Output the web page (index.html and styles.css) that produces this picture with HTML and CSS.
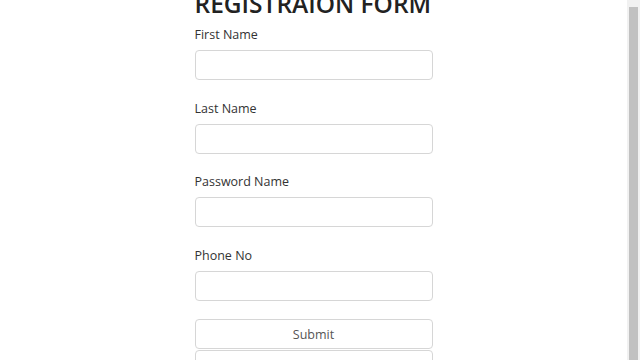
FILE: index.html
```html
<!DOCTYPE html>
<html lang="en">
<head>
    <meta charset="UTF-8">
    <meta name="viewport" content="width=device-width, initial-scale=1.0">
    <title>Registration Form</title>
    <link rel="stylesheet" href="styles.css">
</head>
<body>
    <div class="page">
        <div class="content">
            <form class="form">
                <h1>REGISTRAION FORM</h1>
                <div class="field">
                    <label for="first-name">First Name</label>
                    <input type="text" id="first-name">
                </div>
                <div class="field">
                    <label for="last-name">Last Name</label>
                    <input type="text" id="last-name">
                </div>
                <div class="field">
                    <label for="password">Password Name</label>
                    <input type="password" id="password">
                </div>
                <div class="field">
                    <label for="phone">Phone No</label>
                    <input type="text" id="phone">
                </div>
                <div class="buttons">
                    <button type="submit">Submit</button>
                    <button type="reset">Reset</button>
                </div>
            </form>
        </div>
        <div class="scrollbar">
            <div class="thumb"></div>
        </div>
    </div>
</body>
</html>
```

FILE: styles.css
```css
body {
    margin: 0;
    font-family: "Open Sans", "Noto Sans", sans-serif;
    color: #333;
    background-color: #fff;
}
.page {
    display: flex;
    height: 360px;
    overflow: hidden;
}
.content {
    flex: 1;
    display: flex;
    justify-content: center;
}
.form {
    width: 238px;
}
h1 {
    margin: -12px 0 6px 0;
    font-size: 24.5px;
    font-weight: 600;
    line-height: 32px;
    color: #222;
    white-space: nowrap;
}
.field {
    margin-bottom: 19.5px;
}
.field label {
    display: block;
    font-size: 12.5px;
    line-height: 18px;
    margin-bottom: 6px;
}
.field input {
    display: block;
    box-sizing: border-box;
    width: 100%;
    height: 30px;
    border: 1px solid #d6d6d6;
    border-radius: 4px;
}
.buttons {
    margin-top: -1px;
}
.buttons button {
    display: block;
    box-sizing: border-box;
    width: 100%;
    height: 30px;
    margin-bottom: 1px;
    background-color: #fff;
    border: 1px solid #d6d6d6;
    border-radius: 4px;
    font-family: inherit;
    font-size: 12.5px;
    color: #555;
}
.scrollbar {
    width: 13px;
    background-color: #f1f1f1;
    padding: 7px 2px 0 2px;
    box-sizing: border-box;
}
.thumb {
    height: 100%;
    background-color: #c1c1c1;
}
```
